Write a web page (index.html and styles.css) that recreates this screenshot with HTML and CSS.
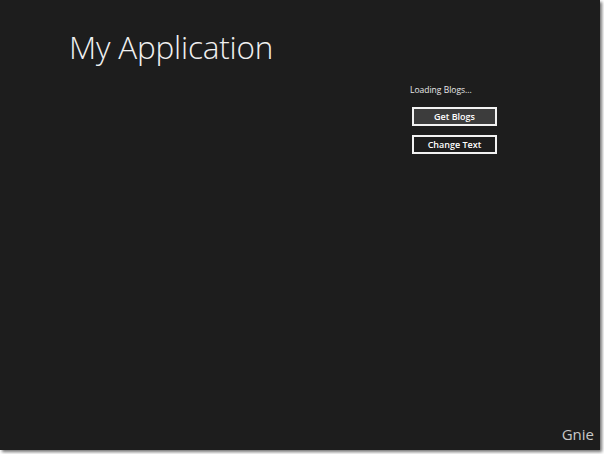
FILE: index.html
```html
<!DOCTYPE html>
<html>
<head>
<meta charset="utf-8">
<link rel="stylesheet" href="styles.css">
</head>
<body>
<div class="app">
  <h1 class="title">My Application</h1>
  <div class="panel">
    <div class="status">Loading Blogs...</div>
    <button class="btn btn-filled">Get Blogs</button>
    <button class="btn">Change Text</button>
  </div>
  <div class="brand">Gnie</div>
</div>
</body>
</html>
```
FILE: styles.css
```css
html, body {
  margin: 0;
  padding: 0;
  background: #ffffff;
}
body {
  width: 604px;
  height: 454px;
  overflow: hidden;
}
.app {
  width: 600px;
  height: 450px;
  background: #1d1d1d;
  box-shadow: 2px 2px 3px rgba(0, 0, 0, 0.55);
  display: flex;
  flex-direction: column;
  box-sizing: border-box;
  font-family: "Open Sans", "Noto Sans", sans-serif;
  color: #ffffff;
}
.title {
  margin: 0;
  padding: 26px 0 0 69px;
  font-size: 31.5px;
  font-weight: 300;
  line-height: 42px;
  letter-spacing: -0.2px;
  color: #f0f0f0;
}
.panel {
  margin: 16px 0 0 410px;
  display: flex;
  flex-direction: column;
  align-items: flex-start;
}
.status {
  font-size: 8.5px;
  line-height: 12px;
  color: #e8e8e8;
}
.btn {
  margin: 11px 0 0 2px;
  width: 85px;
  height: 19px;
  padding: 0;
  border: 2px solid #f2f2f2;
  background: transparent;
  color: #ffffff;
  font-family: "Open Sans", "Noto Sans", sans-serif;
  font-size: 9px;
  font-weight: 600;
  line-height: 15px;
  box-sizing: border-box;
}
.btn + .btn {
  margin-top: 9px;
}
.btn-filled {
  background: #3c3c3c;
}
.brand {
  margin-top: auto;
  align-self: flex-end;
  padding: 0 6px 6px 0;
  font-size: 15px;
  line-height: 20px;
  color: #c8c8c8;
}
```
